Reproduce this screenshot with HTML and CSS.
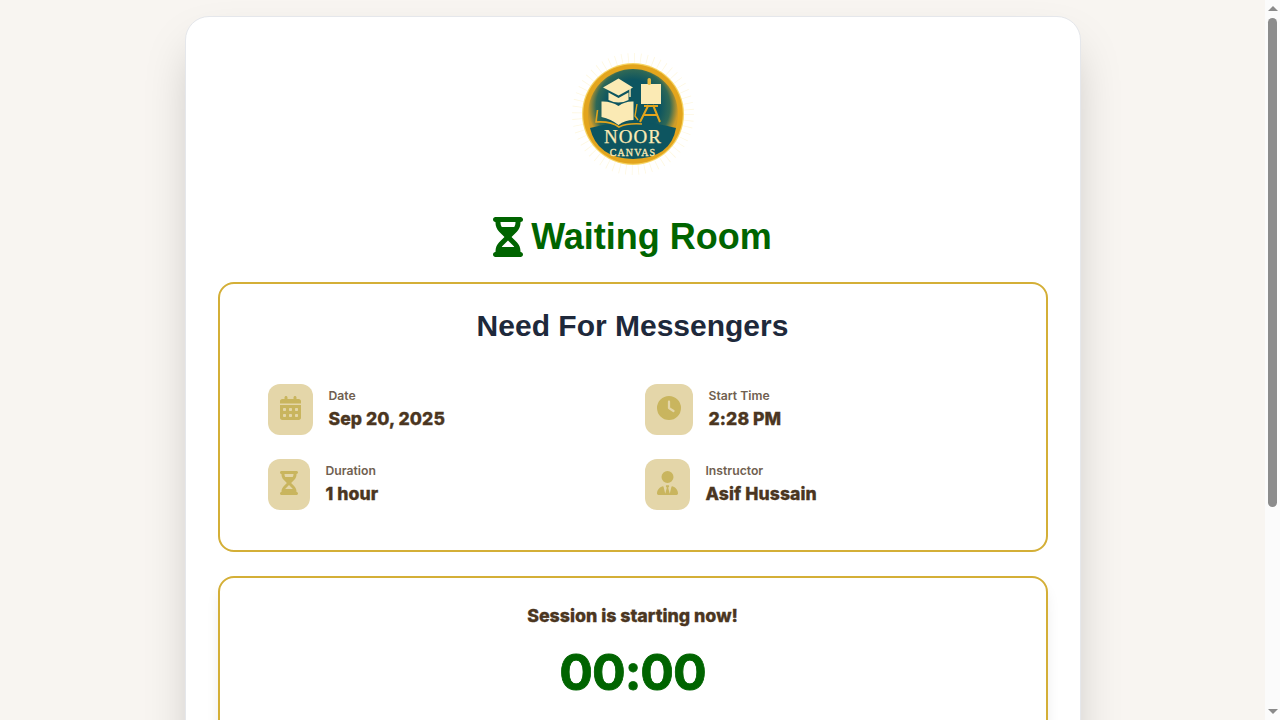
FILE: index.html
```html
<!DOCTYPE html>
<html lang="en">
<head>
  <meta charset="UTF-8" />
  <meta name="viewport" content="width=device-width, initial-scale=1.0" />
  <title>Waiting Room</title>
  <link rel="stylesheet" href="styles.css">
</head>
<body>
  <main class="card">
    <div class="logo-row">
      <svg class="logo" viewBox="0 0 120 120" role="img" aria-label="Noor Canvas logo">
        <defs>
          <radialGradient id="logoFill" cx="50%" cy="42%" r="50%">
            <stop offset="0.6" stop-color="#0d5560"/>
            <stop offset="0.82" stop-color="#2f6856"/>
            <stop offset="1" stop-color="#d09c28"/>
          </radialGradient>
        </defs>
        <circle class="logo-rays" cx="60" cy="60" r="56"/>
        <circle cx="60" cy="60" r="51" fill="#f7d565"/>
        <circle cx="60" cy="60" r="49.8" fill="#e3a51d"/>
        <circle cx="60" cy="60" r="45" fill="url(#logoFill)"/>
        <path d="M17 74Q60 62 103 74Q98 104 60 105Q24 104 17 74Z" fill="#0d5560"/>
        <path d="M30 33.5L45.5 24.5L60 33.5L45.5 41.5Z" fill="#fbeab4"/>
        <path d="M35.5 38.5L45.5 44L55.5 38.5V46Q45.5 51 35.5 46Z" fill="#fbeab4"/>
        <path d="M57 33V43" stroke="#fbeab4" stroke-width="1.4"/>
        <path d="M28.5 47.5Q38 47 45.5 52Q52 47 60.5 47.5V66Q52 66 45.5 71Q38 65 28.5 63Z" fill="#fbeab4"/>
        <path d="M24.5 56L23 68Q38 67 46 73Q54 69 69 70" fill="none" stroke="#e3a51d" stroke-width="1.6"/>
        <path d="M64 50L62 62L65 66" fill="none" stroke="#e3a51d" stroke-width="1.4"/>
        <path d="M75.5 51L67 68M80 51L87 68M70 61H85M71 52H85" fill="none" stroke="#e3a51d" stroke-width="2"/>
        <rect x="68" y="30" width="20" height="20" fill="#fbeab4"/>
        <rect x="74.5" y="24" width="3.5" height="7" rx="1.7" fill="#e9b93c"/>
        <text class="logo-noor" x="60" y="88.5" text-anchor="middle">NOOR</text>
        <text class="logo-canvas" x="60" y="101.5" text-anchor="middle">CANVAS</text>
      </svg>
    </div>

    <h1 class="page-title">
      <svg class="title-icon" viewBox="0 0 384 512"><path d="M32 0C14.3 0 0 14.3 0 32S14.3 64 32 64V75c0 42.4 16.9 83.1 46.9 113.1L146.7 256 78.9 323.9C48.9 353.9 32 394.6 32 437v11c-17.7 0-32 14.3-32 32s14.3 32 32 32H64 320h32c17.7 0 32-14.3 32-32s-14.3-32-32-32V437c0-42.4-16.9-83.1-46.9-113.1L237.3 256l67.9-67.9c30-30 46.9-70.7 46.9-113.1V64c17.7 0 32-14.3 32-32s-14.3-32-32-32H320 64 32zM96 75V64H288V75c0 19-5.6 37.4-16 53H112c-10.3-15.6-16-34-16-53zm16 309c3.5-5.3 7.6-10.3 12.1-14.9L192 301.3l67.9 67.9c4.6 4.6 8.6 9.6 12.1 14.9H112z"/></svg>
      Waiting Room
    </h1>

    <section class="box details">
      <h2 class="session-name">Need For Messengers</h2>
      <div class="info-grid">
        <div class="info-item">
          <div class="info-icon">
            <svg viewBox="0 0 448 512"><path d="M128 0c17.7 0 32 14.3 32 32V64H288V32c0-17.7 14.3-32 32-32s32 14.3 32 32V64h48c26.5 0 48 21.5 48 48v48H0V112C0 85.5 21.5 64 48 64H96V32c0-17.7 14.3-32 32-32zM0 192H448V464c0 26.5-21.5 48-48 48H48c-26.5 0-48-21.5-48-48V192zm64 80v32c0 8.8 7.2 16 16 16h32c8.8 0 16-7.2 16-16V272c0-8.8-7.2-16-16-16H80c-8.8 0-16 7.2-16 16zm128 0v32c0 8.8 7.2 16 16 16h32c8.8 0 16-7.2 16-16V272c0-8.8-7.2-16-16-16H208c-8.8 0-16 7.2-16 16zm144-16c-8.8 0-16 7.2-16 16v32c0 8.8 7.2 16 16 16h32c8.8 0 16-7.2 16-16V272c0-8.8-7.2-16-16-16H336zM64 400v32c0 8.8 7.2 16 16 16h32c8.8 0 16-7.2 16-16V400c0-8.8-7.2-16-16-16H80c-8.8 0-16 7.2-16 16zm144-16c-8.8 0-16 7.2-16 16v32c0 8.8 7.2 16 16 16h32c8.8 0 16-7.2 16-16V400c0-8.8-7.2-16-16-16H208zm112 16v32c0 8.8 7.2 16 16 16h32c8.8 0 16-7.2 16-16V400c0-8.8-7.2-16-16-16H336c-8.8 0-16 7.2-16 16z"/></svg>
          </div>
          <div>
            <div class="info-label">Date</div>
            <div class="info-value">Sep 20, 2025</div>
          </div>
        </div>
        <div class="info-item">
          <div class="info-icon">
            <svg viewBox="0 0 512 512"><path d="M256 0a256 256 0 1 1 0 512A256 256 0 1 1 256 0zM232 120V256c0 8 4 15.5 10.7 20l96 64c11 7.4 25.9 4.4 33.3-6.7s4.4-25.9-6.7-33.3L280 243.2V120c0-13.3-10.7-24-24-24s-24 10.7-24 24z"/></svg>
          </div>
          <div>
            <div class="info-label">Start Time</div>
            <div class="info-value">2:28 PM</div>
          </div>
        </div>
        <div class="info-item">
          <div class="info-icon">
            <svg viewBox="0 0 384 512"><path d="M32 0C14.3 0 0 14.3 0 32S14.3 64 32 64V75c0 42.4 16.9 83.1 46.9 113.1L146.7 256 78.9 323.9C48.9 353.9 32 394.6 32 437v11c-17.7 0-32 14.3-32 32s14.3 32 32 32H64 320h32c17.7 0 32-14.3 32-32s-14.3-32-32-32V437c0-42.4-16.9-83.1-46.9-113.1L237.3 256l67.9-67.9c30-30 46.9-70.7 46.9-113.1V64c17.7 0 32-14.3 32-32s-14.3-32-32-32H320 64 32zM96 75V64H288V75c0 19-5.6 37.4-16 53H112c-10.3-15.6-16-34-16-53zm16 309c3.5-5.3 7.6-10.3 12.1-14.9L192 301.3l67.9 67.9c4.6 4.6 8.6 9.6 12.1 14.9H112z"/></svg>
          </div>
          <div>
            <div class="info-label">Duration</div>
            <div class="info-value">1 hour</div>
          </div>
        </div>
        <div class="info-item">
          <div class="info-icon">
            <svg viewBox="0 0 448 512"><path d="M96 128a128 128 0 1 0 256 0A128 128 0 1 0 96 128zm94.5 200.2l18.6 31L175.8 483.1l-36-146.9c-2-8.1-9.8-13.4-17.9-11.3C51.9 342.4 0 405.8 0 481.3c0 17 13.8 30.7 30.7 30.7H162.5c0 0 0 0 .1 0H168 280h5.5c0 0 0 0 .1 0H417.3c17 0 30.7-13.8 30.7-30.7c0-75.5-51.9-138.9-121.9-156.4c-8.1-2-15.9 3.3-17.9 11.3l-36 146.9L238.9 359.2l18.6-31c6.4-10.7-1.3-24.2-13.7-24.2H224 204.3c-12.4 0-20.1 13.6-13.7 24.2z"/></svg>
          </div>
          <div>
            <div class="info-label">Instructor</div>
            <div class="info-value">Asif Hussain</div>
          </div>
        </div>
      </div>
    </section>

    <section class="box countdown">
      <p class="countdown-text">Session is starting now!</p>
      <div class="countdown-time">00:00</div>
    </section>
  </main>

  <div class="scrollbar">
    <div class="scroll-up"></div>
    <div class="scroll-thumb"></div>
    <div class="scroll-down"></div>
  </div>
</body>
</html>
```

FILE: styles.css
```css
body {
  margin: 0;
  padding: 16px 15px 24px 0;
  background: #f8f5f1;
  font-family: Inter, sans-serif;
  color: #4b3621;
}
.card {
  box-sizing: border-box;
  width: 896px;
  margin: 0 auto;
  padding: 32px;
  background: #fff;
  border: 1px solid #e5e7eb;
  border-radius: 24px;
  box-shadow: 0 25px 50px -12px rgba(0, 0, 0, 0.25);
}
.logo-row {
  display: flex;
  justify-content: center;
  margin-top: 5px;
  margin-bottom: 43px;
}
.logo {
  width: 120px;
  height: 120px;
  overflow: visible;
}
.logo-rays {
  fill: none;
  stroke: #fef8e2;
  stroke-width: 10;
  stroke-dasharray: 0.8 5.5;
}
.logo-noor {
  font: 400 19px "Liberation Serif", serif;
  letter-spacing: 1px;
  fill: #fbeab4;
  stroke: #fbeab4;
  stroke-width: 0.25;
}
.logo-canvas {
  font: 400 10px "Liberation Serif", serif;
  letter-spacing: 1.1px;
  fill: #fbeab4;
  stroke: #fbeab4;
  stroke-width: 0.3;
}
.page-title {
  display: flex;
  justify-content: center;
  align-items: center;
  gap: 8px;
  margin: 0 0 25px;
  font: 700 36px/40px "Liberation Sans", Arial, sans-serif;
  color: #006400;
}
.title-icon {
  width: 30px;
  height: 40px;
  fill: #006400;
}
.box {
  background: #fff;
  border: 2px solid #d4af37;
  border-radius: 16px;
}
.details {
  padding: 24px 48px 40px;
  margin-bottom: 24px;
}
.session-name {
  margin: 0 0 40px;
  text-align: center;
  font: 700 30px/36px "Liberation Sans", Arial, sans-serif;
  color: #1e293b;
}
.info-grid {
  display: grid;
  grid-template-columns: 1fr 1fr;
  gap: 24px;
}
.info-item {
  display: flex;
  align-items: stretch;
  gap: 16px;
}
.info-icon {
  display: flex;
  align-items: flex-start;
  padding: 12px;
  height: 51px;
  box-sizing: border-box;
  border-radius: 12px;
  background: #e4d6a9;
}
.info-icon svg {
  height: 24px;
  fill: #c9b55e;
}
.info-label {
  margin-top: 3px;
  font-size: 12.2px;
  line-height: 18px;
  font-weight: 600;
  color: #706050;
}
.info-value {
  margin-top: 1px;
  font-size: 17.6px;
  line-height: 26px;
  font-weight: 800;
  letter-spacing: 0.08px;
  color: #4b3621;
  -webkit-text-stroke: 0.3px #4b3621;
}
.countdown {
  min-height: 350px;
  box-sizing: border-box;
  padding: 24px;
  text-align: center;
  box-shadow: 0 10px 15px -3px rgba(0, 0, 0, 0.1);
}
.countdown-text {
  margin: 0 0 10px;
  font-size: 17.8px;
  line-height: 28px;
  font-weight: 800;
  color: #4b3621;
  -webkit-text-stroke: 0.3px #4b3621;
}
.countdown-time {
  font-size: 50px;
  line-height: 64px;
  font-weight: 700;
  letter-spacing: -1px;
  color: #006400;
  -webkit-text-stroke: 0.8px #006400;
}

/* drawn scrollbar, the window's own is not shown */
.scrollbar {
  position: fixed;
  top: 0;
  right: 0;
  bottom: 0;
  width: 15px;
  display: flex;
  flex-direction: column;
  align-items: center;
  background: #fbfbfb;
}
.scroll-up, .scroll-down {
  width: 0;
  height: 0;
  border-left: 5px solid transparent;
  border-right: 5px solid transparent;
}
.scroll-up {
  margin: 6px 0 7px;
  border-bottom: 5px solid #8a8a8a;
}
.scroll-thumb {
  width: 9px;
  height: 489px;
  border-radius: 5px;
  background: #8c8c8c;
}
.scroll-down {
  margin: auto 0 6px;
  border-top: 5px solid #8a8a8a;
}
```
